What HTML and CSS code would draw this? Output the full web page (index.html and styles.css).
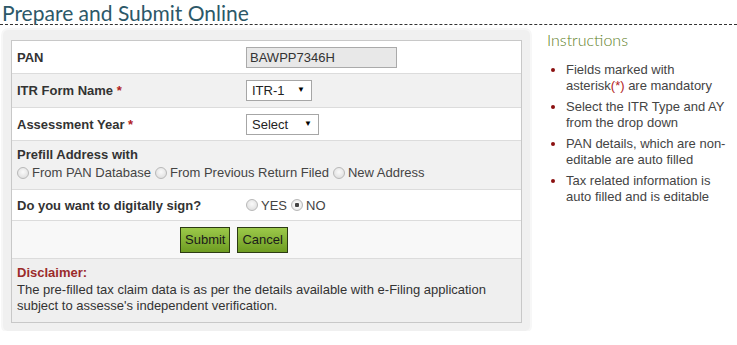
FILE: index.html
```html
<!DOCTYPE html>
<html lang="en">
<head>
  <meta charset="UTF-8">
  <meta name="viewport" content="width=device-width, initial-scale=1.0">
  <title>Prepare and Submit Online</title>
  <link rel="stylesheet" href="styles.css">
</head>
<body>
  <h2 class="page-title">Prepare and Submit Online</h2>
  <div class="layout">
    <div class="panel">
      <form class="itr-form" id="itrForm">
        <div class="row row-white">
          <label class="label" for="pan">PAN</label>
          <div><input type="text" id="pan" class="pan-input" value="BAWPP7346H" readonly></div>
        </div>
        <div class="row row-gray">
          <label class="label" for="itr">ITR Form Name <span class="req">*</span></label>
          <div class="select-wrap itr">
            <select id="itr"><option>ITR-1</option><option>ITR-4S</option></select>
            <span class="arrow">&#9660;</span>
          </div>
        </div>
        <div class="row row-white">
          <label class="label" for="ay">Assessment Year <span class="req">*</span></label>
          <div class="select-wrap ay">
            <select id="ay"><option>Select</option><option>2014-15</option></select>
            <span class="arrow">&#9660;</span>
          </div>
        </div>
        <div class="row-block row-gray prefill">
          <div class="label">Prefill Address with</div>
          <div class="radios">
            <label><input type="radio" name="addr"> From PAN Database</label>
            <label><input type="radio" name="addr"> From Previous Return Filed</label>
            <label><input type="radio" name="addr"> New Address</label>
          </div>
        </div>
        <div class="row row-white sign">
          <div class="label">Do you want to digitally sign?</div>
          <div class="radios">
            <label><input type="radio" name="sign"> YES</label>
            <label><input type="radio" name="sign" checked> NO</label>
          </div>
        </div>
        <div class="row-actions">
          <button type="button" class="btn">Submit</button>
          <button type="reset" class="btn">Cancel</button>
        </div>
        <div class="row-block disclaimer">
          <div class="disclaimer-title">Disclaimer:</div>
          <p>The pre-filled tax claim data is as per the details available with e-Filing application subject to assesse's independent verification.</p>
        </div>
      </form>
    </div>
    <aside class="instructions">
      <h3>Instructions</h3>
      <ul>
        <li>Fields marked with asterisk<span class="req">(*)</span> are mandatory</li>
        <li>Select the ITR Type and AY from the drop down</li>
        <li>PAN details, which are non-editable are auto filled</li>
        <li>Tax related information is auto filled and is editable</li>
      </ul>
    </aside>
  </div>
</body>
</html>
```

FILE: styles.css
```css
body {
  margin: 0;
  font-family: "Liberation Sans", Arial, sans-serif;
  font-size: 13px;
  color: #333;
  background: #fff;
}
.page-title {
  margin: 0;
  height: 22px;
  padding: 2px 0 0 2px;
  font-family: Lato, "DejaVu Sans", sans-serif;
  font-weight: 400;
  font-size: 21px;
  line-height: 22px;
  color: #2c5868;
  border-bottom: 1px dashed #333;
}
.layout {
  display: flex;
  align-items: flex-start;
}
.panel {
  width: 511px;
  margin: 5px 0 0 3px;
  padding: 10px 8px 8px 8px;
  background: #f0f0f0;
  border-radius: 5px;
  box-shadow: 0 0 0 2px #f7f7f7;
}
.itr-form {
  border: 1px solid #c8c8c8;
  background: #fff;
}
.row {
  display: grid;
  grid-template-columns: 229px 1fr;
  align-items: center;
  height: 32px;
  padding-left: 5px;
  border-bottom: 1px solid #dcdcdc;
}
.row-white { background: #fff; }
.row-gray { background: #f1f1f1; }
.row.row-gray { height: 33px; }
.row.sign { height: 30px; }
.label {
  font-weight: bold;
  color: #333;
}
.req { color: #b22222; font-weight: normal; }
.label .req { font-weight: bold; }
.pan-input {
  width: 151px;
  height: 21px;
  box-sizing: border-box;
  margin: 0;
  padding: 0 3px;
  border: 1px solid #aaa;
  background: #e8e8e8;
  font: 13px "Liberation Sans", Arial, sans-serif;
  color: #333;
}
.select-wrap {
  position: relative;
  height: 21px;
}
.select-wrap select {
  appearance: none;
  -webkit-appearance: none;
  height: 21px;
  box-sizing: border-box;
  margin: 0;
  padding: 0 0 0 5px;
  border: 1px solid #a6a6a6;
  border-radius: 0;
  background: #fff;
  font: 13px "Liberation Sans", Arial, sans-serif;
  color: #222;
}
.select-wrap.itr select { width: 66px; }
.select-wrap.ay select { width: 73px; }
.arrow {
  position: absolute;
  top: 5px;
  font-size: 8px;
  color: #000;
  pointer-events: none;
}
.itr .arrow { left: 51px; }
.ay .arrow { left: 58px; }
.row-block {
  padding: 6px 5px 0 5px;
  border-bottom: 1px solid #dcdcdc;
}
.prefill { height: 42px; }
.radios {
  display: flex;
  gap: 4px;
  color: #444;
}
.prefill .radios { margin-top: 3px; }
.radios label {
  display: flex;
  align-items: center;
  gap: 3px;
}
.radios input {
  appearance: none;
  -webkit-appearance: none;
  width: 12px;
  height: 12px;
  margin: 0;
  border: 1px solid #b8b8b8;
  border-radius: 50%;
  background: radial-gradient(circle at 50% 40%, #fafafa, #d9d9d9);
}
.radios input:checked {
  background: radial-gradient(circle, #444 0 2px, #fafafa 2.5px, #d9d9d9);
}
.row-actions {
  display: flex;
  gap: 7px;
  height: 37px;
  align-items: center;
  padding-left: 168px;
  background: #f8f8f8;
  border-bottom: 1px solid #dcdcdc;
}
.btn {
  height: 26px;
  padding: 0 4px;
  border: 1px solid #2c3a14;
  border-radius: 0;
  background: linear-gradient(#9cc94a, #6e9c22);
  font: 13px "Liberation Sans", Arial, sans-serif;
  color: #1a1a1a;
  cursor: pointer;
}
.disclaimer {
  height: 57px;
  background: #efefef;
  border-bottom: none;
}
.disclaimer-title {
  font-weight: bold;
  color: #9b2b2b;
}
.disclaimer p {
  margin: 2px 0 0;
  line-height: 16px;
}
.instructions {
  margin-left: 17px;
  width: 183px;
}
.instructions h3 {
  margin: 5px 0 0;
  font-family: Lato, "DejaVu Sans", sans-serif;
  font-weight: 300;
  font-size: 16px;
  color: #5f7f2a;
}
.instructions ul {
  margin: 13px 0 0;
  padding-left: 19px;
  color: #444;
  line-height: 16px;
}
.instructions li {
  margin-bottom: 5px;
}
.instructions li::marker {
  color: #8b1010;
}
```
